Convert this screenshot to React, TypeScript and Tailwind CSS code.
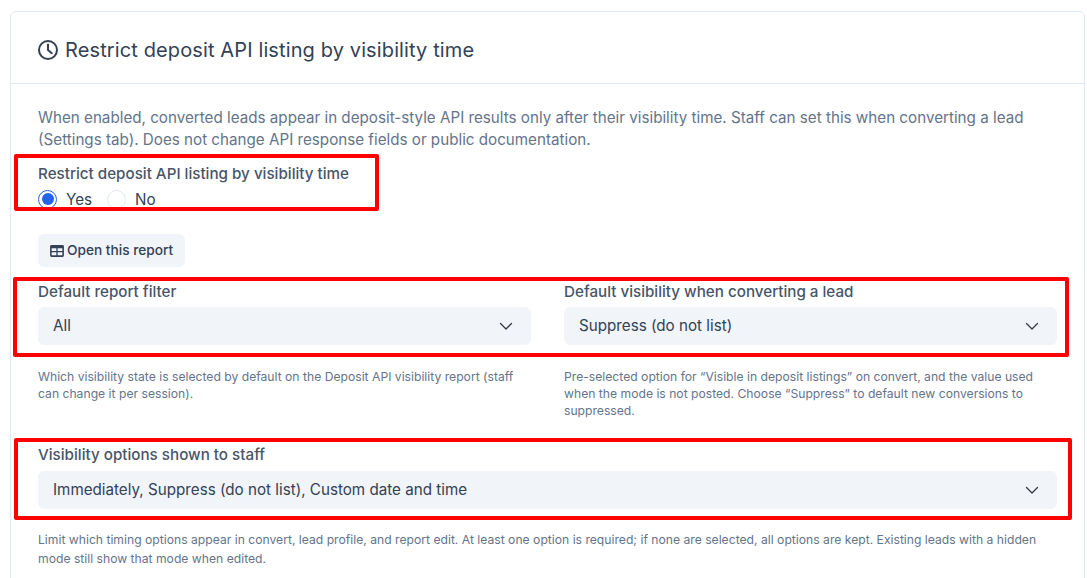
import React from "react";

function Chevron() {
  return (
    <svg width="16" height="16" viewBox="0 0 16 16" fill="none" stroke="#343a40" strokeWidth="1.3" strokeLinecap="round" strokeLinejoin="round" className="shrink-0">
      <path d="M2.500 5.500 8 11l5.500-5.500" />
    </svg>
  );
}

function Select({ value }: { value: string }) {
  return (
    <div className="flex h-[38px] items-center justify-between rounded-md bg-[#f1f4f9] pl-[15px] pr-[17px] text-[15.2px] text-[#334155]">
      <span>{value}</span>
      <Chevron />
    </div>
  );
}

function Label({ children }: { children: React.ReactNode }) {
  return <div className="h-[23px] text-[15.2px] font-medium leading-[23px] text-[#475569]">{children}</div>;
}

function Help({ children }: { children: React.ReactNode }) {
  return <p className="text-[12.16px] leading-[17px] text-[#64748b]">{children}</p>;
}

export default function App() {
  return (
    <div
      className="relative h-[578px] w-[1087px] overflow-hidden bg-white"
      style={{ fontFamily: "Inter, 'Liberation Sans', sans-serif" }}
    >
      <div className="ml-[10px] mt-[11px] min-h-[600px] w-[1075px] rounded-t-md border border-[#e2e8f0]">
        <div className="flex h-[72px] items-center gap-[7px] border-b border-[#e2e8f0] px-[27px] pt-[5px]">
          <svg width="20" height="20" viewBox="0 0 20 20" fill="none" stroke="#334155" strokeWidth="2" strokeLinecap="round" strokeLinejoin="round" className="shrink-0">
            <circle cx="10" cy="10" r="9" />
            <path d="M10 4.500V10l3.800 3.200" />
          </svg>
          <h1 className="text-[20px] font-normal tracking-[0.12px] text-[#334155]">Restrict deposit API listing by visibility time</h1>
        </div>
        <div className="px-[27px]">
          <p className="mt-[23px] text-[15.2px] leading-[22px] text-[#64748b]">
            When enabled, converted leads appear in deposit-style API results only after their visibility time. Staff can set this when converting a lead (Settings tab). Does not change API response fields or public documentation.
          </p>
          <div className="mt-[11px]">
            <Label>Restrict deposit API listing by visibility time</Label>
            <div className="mt-[4px] flex h-[20px] items-center text-[15.2px] text-[#334155]">
              <span className="flex h-[19px] w-[19px] items-center justify-center rounded-full border-[1.5px] border-[#2563eb]">
                <span className="h-[12px] w-[12px] rounded-full bg-[#2563eb]" />
              </span>
              <span className="ml-[9px] translate-y-[1px]">Yes</span>
              <span className="ml-[15px] h-[19px] w-[19px] rounded-full border border-[#e2e8f0]" />
              <span className="ml-[9px] translate-y-[1px]">No</span>
            </div>
          </div>
          <div className="mt-[25px] inline-flex h-[33px] items-center gap-[3px] rounded-md bg-[#f1f4f9] px-[12px] text-[13.68px] font-medium text-[#334155]">
            <svg width="14" height="12" viewBox="0 0 15 13" fill="#334155" className="shrink-0">
              <path fillRule="evenodd" d="M1.500 0h12A1.500 1.500 0 0 1 15 1.500v10a1.500 1.500 0 0 1-1.500 1.500h-12A1.500 1.500 0 0 1 0 11.500v-10A1.500 1.500 0 0 1 1.500 0ZM1.700 3.500v3h5.100v-3H1.700Zm6.500 0v3h5.100v-3H8.200ZM1.700 7.800V11h5.100V7.800H1.700Zm6.500 0V11h5.100V7.800H8.200Z" />
            </svg>
            <span>Open this report</span>
          </div>
          <div className="mt-[13px] grid grid-cols-2 gap-x-[33px]">
            <div>
              <Label>Default report filter</Label>
              <div className="mt-[4px]"><Select value="All" /></div>
              <div className="mt-[23px]">
                <Help>Which visibility state is selected by default on the Deposit API visibility report (staff can change it per session).</Help>
              </div>
            </div>
            <div>
              <Label>Default visibility when converting a lead</Label>
              <div className="mt-[4px]"><Select value="Suppress (do not list)" /></div>
              <div className="mt-[23px]">
                <Help>Pre-selected option for “Visible in deposit listings” on convert, and the value used when the mode is not posted. Choose “Suppress” to default new conversions to suppressed.</Help>
              </div>
            </div>
          </div>
          <div className="mt-[24px]">
            <Label>Visibility options shown to staff</Label>
            <div className="mt-[5px]"><Select value="Immediately, Suppress (do not list), Custom date and time" /></div>
            <p className="mt-[22px] text-[12.16px] leading-[18.5px] text-[#64748b]">
              Limit which timing options appear in convert, lead profile, and report edit. At least one option is required; if none are selected, all options are kept. Existing leads with a hidden mode still show that mode when edited.
            </p>
          </div>
        </div>
      </div>
      <div className="absolute left-[14px] top-[154px] h-[57px] w-[365px] rounded-[2px] border-[4px] border-[#fe0000]" />
      <div className="absolute left-[13px] top-[277px] h-[80px] w-[1056px] rounded-[2px] border-[4px] border-[#fe0000]" />
      <div className="absolute left-[14px] top-[438px] h-[82px] w-[1058px] rounded-[2px] border-[4px] border-[#fe0000]" />
    </div>
  );
}
